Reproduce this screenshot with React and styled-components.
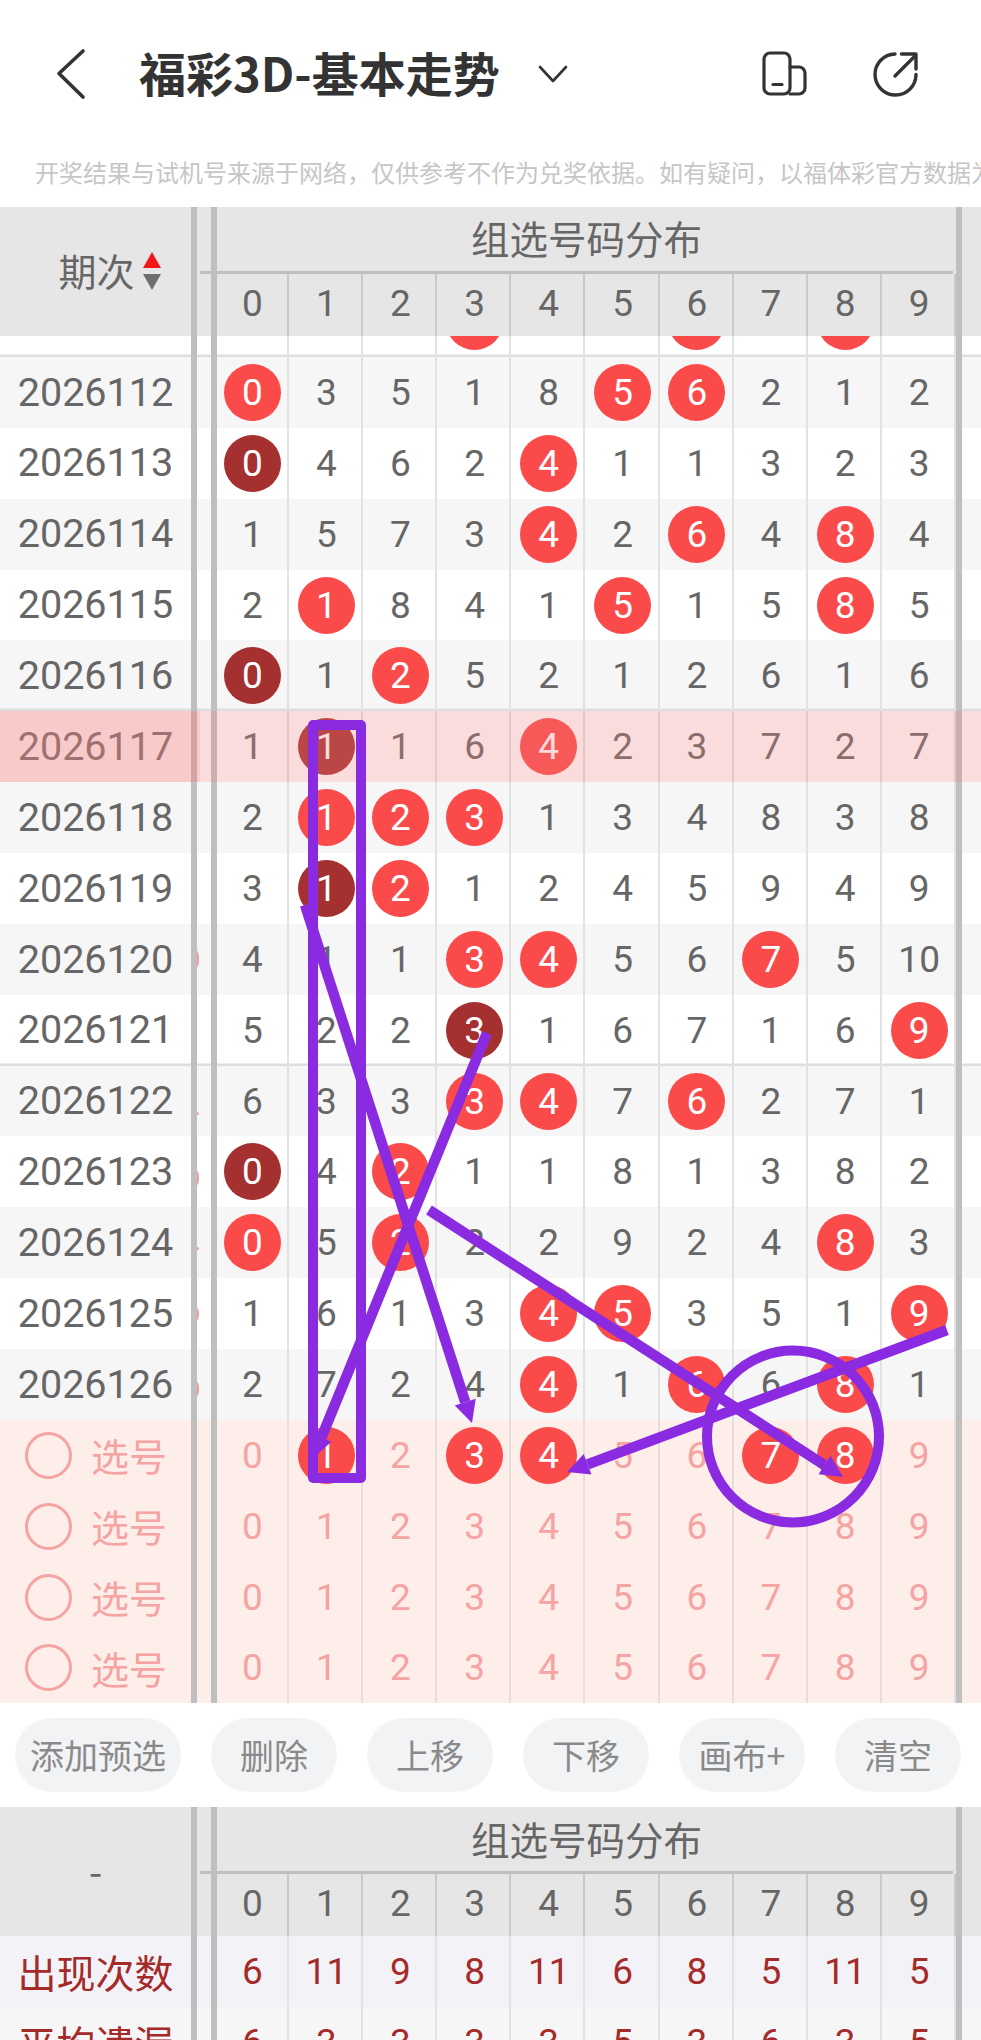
import React from "react";
import styled, { createGlobalStyle } from "styled-components";

const CJK = `"Noto Sans CJK SC", "Noto Sans", sans-serif`;
const NUM = `Roboto, "Noto Sans CJK SC", sans-serif`;

const Global = createGlobalStyle`
  html, body { margin: 0; padding: 0; background: #fff; }
  * { box-sizing: border-box; }
`;

const Page = styled.div`
  position: relative;
  width: 981px;
  height: 2040px;
  overflow: hidden;
  background: #fff;
  font-family: ${CJK};
`;

const Nav = styled.header`
  display: flex;
  align-items: center;
  height: 148px;
  padding-left: 56px;
  padding-bottom: 1px;
  color: #333;
`;
const Title = styled.h1`
  margin: 0 0 5px 51px;
  font-size: 47px;
  line-height: 1;
  font-weight: 700;
  color: #333;
  white-space: nowrap;
`;
const Caret = styled.svg`
  width: 32px;
  height: 20px;
  margin-left: 37px;
`;
const NavIcon = styled.svg`
  margin-left: ${p => p.$ml}px;
  width: ${p => p.$w}px;
  height: ${p => p.$h}px;
`;
const Notice = styled.div`
  height: 59px;
  padding-left: 35px;
  font-size: 24px;
  line-height: 48px;
  color: #c6c6c6;
  white-space: nowrap;
  overflow: hidden;
`;

const Sep = styled.div`
  flex: 0 0 6px;
  align-self: stretch;
  background: #bfbfbf;
  position: relative;
  z-index: 1;
`;
const Gap = styled.div`
  flex: 0 0 14px;
  align-self: stretch;
  display: flex;
  align-items: center;
`;
const Sliver = styled.div`
  width: 2px;
  height: ${p => p.$h}px;
  margin-top: ${p => p.$t}px;
  background: #f19c9c;
  border-radius: 0 100% 100% 0 / 0 50% 50% 0;
`;

const Head = styled.div`
  display: flex;
  height: ${p => p.$h}px;
  background: #e6e6e6;
  color: #666;
`;
const HeadLeft = styled.div`
  flex: 0 0 191px;
  display: flex;
  align-items: center;
  justify-content: center;
  gap: 8px;
  padding-left: ${p => p.$pad || 0}px;
  padding-bottom: 3px;
  font-size: 38px;
  line-height: 1;
`;
const Sorter = styled.div`
  display: flex;
  flex-direction: column;
  gap: 6px;
  padding-top: 2px;
`;
const Tri = styled.div`
  width: 0;
  height: 0;
  border-left: 9.5px solid transparent;
  border-right: 9.5px solid transparent;
  ${p => (p.$up ? "border-bottom: 16px solid #f01a1a;" : "border-top: 16px solid #6e6e6e;")}
`;
const HeadMain = styled.div`
  flex: 0 0 736px;
  display: flex;
  flex-direction: column;
`;
const HeadTitle = styled.div`
  flex: 0 0 ${p => p.$h}px;
  display: flex;
  align-items: center;
  justify-content: center;
  font-size: 38.5px;
  line-height: 1;
  padding-bottom: 3px;
`;
const HeadRule = styled.div`
  flex: 0 0 3px;
  width: 753px;
  margin-left: -17px;
  background: #bfbfbf;
  position: relative;
  z-index: 2;
`;
const Cells = styled.div`
  flex: 0 0 738px;
  margin-left: -2px;
  display: flex;
  align-self: stretch;
`;
const HeadCells = styled(Cells)`
  flex: 1 1 0;
  min-height: 0;
`;
const Cell = styled.div`
  flex: 0 0 74.1px;
  display: flex;
  align-items: center;
  justify-content: center;
  padding-left: 2.5px;
  padding-bottom: ${p => p.$lift || 0}px;
  border-right: 2.5px solid ${p => p.$line};
  font-family: ${NUM};
  font-size: 37px;
  line-height: 1;
  color: ${p => p.$color};
`;
const Ball = styled.div`
  flex: 0 0 57px;
  width: 57px;
  height: 57px;
  border-radius: 50%;
  display: flex;
  align-items: center;
  justify-content: center;
  color: #fff;
  background: ${p => (p.$dark ? "#a53030" : "#fa4a4a")};
`;

const Clip = styled.div`
  height: 21px;
  overflow: hidden;
  display: flex;
  flex-direction: column;
  justify-content: flex-end;
`;
const Row = styled.div`
  position: relative;
  flex: 0 0 ${p => p.$h || 70.87}px;
  height: ${p => p.$h || 70.87}px;
  display: flex;
  background: ${p => p.$bg};
  ${p => (p.$rule ? "box-shadow: inset 0 -2.5px 0 #dedede;" : "")}
  ${p =>
    p.$mark
      ? `
    &::after { content: ""; position: absolute; inset: 0; z-index: 2; background: rgba(240,130,130,.28); }
    &::before { content: ""; position: absolute; left: 0; top: 0; bottom: 0; width: 200px; z-index: 2; background: rgba(240,130,130,.2); }
  `
      : ""}
`;
const Left = styled.div`
  flex: 0 0 191px;
  display: flex;
  align-items: center;
  justify-content: center;
  font-family: ${NUM};
  font-size: 39.6px;
  line-height: 1;
  color: #666;
`;
const StatLabel = styled(Left)`
  font-family: ${CJK};
  font-size: 39px;
  color: #a52a2a;
`;
const SelectLeft = styled.div`
  flex: 0 0 191px;
  display: flex;
  align-items: center;
  padding-left: 25px;
  gap: 19px;
  font-size: 38px;
  line-height: 1;
  color: #f5a3a3;
`;
const Radio = styled.div`
  width: 47px;
  height: 47px;
  border-radius: 50%;
  border: 3px solid #f5a3a3;
`;
const Rest = styled.div`
  flex: 1;
`;

const Toolbar = styled.div`
  height: 104px;
  display: flex;
  align-items: center;
  gap: 30px;
  padding-left: 15px;
  overflow: hidden;
`;
const Pill = styled.div`
  flex: 0 0 auto;
  min-width: 126px;
  height: 74px;
  padding: 0 15px;
  border-radius: 37px;
  background: #f2f3f5;
  color: #8a8a8a;
  font-size: 34px;
  line-height: 1;
  display: flex;
  align-items: center;
  justify-content: center;
  white-space: nowrap;
`;

const Ink = styled.svg`
  position: absolute;
  left: 0;
  top: 0;
  z-index: 5;
  pointer-events: none;
`;

const PURPLE = "#8a2be2";

function Arrow({ x1, y1, x2, y2 }) {
  const dx = x2 - x1;
  const dy = y2 - y1;
  const len = Math.hypot(dx, dy);
  const ux = dx / len;
  const uy = dy / len;
  const bx = x2 - ux * 22;
  const by = y2 - uy * 22;
  const px = -uy * 11;
  const py = ux * 11;
  return (
    <g>
      <line x1={x1} y1={y1} x2={bx} y2={by} stroke={PURPLE} strokeWidth="10.5" />
      <polygon points={`${x2},${y2} ${bx + px},${by + py} ${bx - px},${by - py}`} fill={PURPLE} />
    </g>
  );
}

const rows = [
  ["2026112", "0r 3 5 1 8 5r 6r 2 1 2", 0],
  ["2026113", "0d 4 6 2 4r 1 1 3 2 3", 0],
  ["2026114", "1 5 7 3 4r 2 6r 4 8r 4", 0],
  ["2026115", "2 1r 8 4 1 5r 1 5 8r 5", 0],
  ["2026116", "0d 1 2r 5 2 1 2 6 1 6", 0],
  ["2026117", "1 1d 1 6 4r 2 3 7 2 7", 0],
  ["2026118", "2 1r 2r 3r 1 3 4 8 3 8", 0],
  ["2026119", "3 1d 2r 1 2 4 5 9 4 9", 0],
  ["2026120", "4 1 1 3r 4r 5 6 7r 5 10", [16, 0]],
  ["2026121", "5 2 2 3d 1 6 7 1 6 9r", 0],
  ["2026122", "6 3 3 3r 4r 7 6r 2 7 1", [3, 24]],
  ["2026123", "0d 4 2r 1 1 8 1 3 8 2", [14, 12]],
  ["2026124", "0r 5 2r 2 2 9 2 4 8r 3", [3, 12]],
  ["2026125", "1 6 1 3 4r 5r 3 5 1 9r", [12, 0]],
  ["2026126", "2 7 2 4 4r 1 6r 6 8r 1", [14, 10]],
];

const parse = s =>
  s.split(" ").map(t => {
    const m = t.match(/^(\d+)([rd]?)$/);
    return { v: m[1], k: m[2] };
  });

function DataCells({ spec, line = "#e2e2e2", color = "#666", blank = false }) {
  return (
    <Cells>
      {parse(spec).map((c, i) => (
        <Cell key={i} $line={line} $color={color}>
          {c.k ? <Ball $dark={c.k === "d"}>{blank ? null : c.v}</Ball> : blank ? null : c.v}
        </Cell>
      ))}
    </Cells>
  );
}

const DIGITS = "0 1 2 3 4 5 6 7 8 9";

function TableHead({ height, titleH, left, pad }) {
  return (
    <Head $h={height}>
      <HeadLeft $pad={pad}>{left}</HeadLeft>
      <Sep />
      <Gap />
      <Sep />
      <HeadMain>
        <HeadTitle $h={titleH}>组选号码分布</HeadTitle>
        <HeadRule />
        <HeadCells>
          {parse(DIGITS).map((c, i) => (
            <Cell key={i} $line="#cacaca" $color="#666" $lift={3}>
              {c.v}
            </Cell>
          ))}
        </HeadCells>
      </HeadMain>
      <Sep />
      <Rest />
    </Head>
  );
}

function Spine({ sliver }) {
  return (
    <>
      <Sep />
      <Gap>{sliver ? <Sliver $h={sliver[0]} $t={sliver[1]} /> : null}</Gap>
      <Sep />
    </>
  );
}

export default function App() {
  return (
    <Page>
      <Global />
      <Nav>
        <svg width="32" height="54" viewBox="0 0 32 54" fill="none">
          <path d="M27 4 L3 26.5 L27 50" stroke="#333" strokeWidth="3.6" strokeLinecap="round" strokeLinejoin="round" />
        </svg>
        <Title>福彩3D-基本走势</Title>
        <Caret viewBox="0 0 32 20" fill="none">
          <path d="M3 3 L16 17 L29 3" stroke="#333" strokeWidth="2.6" strokeLinecap="round" strokeLinejoin="round" />
        </Caret>
        <NavIcon $ml={193} $w={46} $h={46} viewBox="0 0 46 46" fill="none" stroke="#333" strokeWidth="3.2" strokeLinecap="round">
          <rect x="2" y="2" width="26" height="41" rx="6" />
          <path d="M28 16 H37 a6 6 0 0 1 6 6 V37 a6 6 0 0 1 -6 6 H28" />
          <path d="M11 33.5 H20" />
        </NavIcon>
        <NavIcon $ml={63} $w={50} $h={50} viewBox="0 0 50 50" fill="none" stroke="#333" strokeWidth="3.4" strokeLinecap="round" strokeLinejoin="round">
          <path d="M24 5 A20.5 20.5 0 1 0 45 25.5" />
          <path d="M24 27 L44 7" />
          <path d="M30.5 5 H45 V20" />
        </NavIcon>
      </Nav>
      <Notice>{"开奖结果与试机号来源于网络\uFF0C仅供参考不作为兑奖依据。如有疑问\uFF0C以福体彩官方数据为准。"}</Notice>

      <TableHead
        height={129}
        titleH={64}
        pad={28}
        left={
          <>
            期次
            <Sorter>
              <Tri $up />
              <Tri />
            </Sorter>
          </>
        }
      />
      <Clip>
        <Row $bg="#fff" $rule>
          <Left />
          <Spine />
          <DataCells spec="0 1 2 3r 4 5 6r 7 8r 9" blank />
          <Sep />
          <Rest />
        </Row>
      </Clip>
      {rows.map(([id, spec, sliver], i) => (
        <Row key={id} $bg={i % 2 === 0 ? "#f6f6f6" : "#fff"} $rule={i % 5 === 4 && i < 14} $mark={i === 5}>
          <Left>{id}</Left>
          <Spine sliver={sliver} />
          <DataCells spec={spec} />
          <Sep />
          <Rest />
        </Row>
      ))}
      {["0 1r 2 3r 4r 5 6 7r 8r 9", DIGITS, DIGITS, DIGITS].map((spec, i) => (
        <Row key={i} $bg="#fdeee9">
          <SelectLeft>
            <Radio />
            选号
          </SelectLeft>
          <Spine />
          <DataCells spec={spec} line="#e6dcd9" color="#f5a3a3" />
          <Sep />
          <Rest />
        </Row>
      ))}

      <Toolbar>
        <Pill>添加预选</Pill>
        <Pill>删除</Pill>
        <Pill>上移</Pill>
        <Pill>下移</Pill>
        <Pill>画布+</Pill>
        <Pill>清空</Pill>
        <Pill />
      </Toolbar>

      <TableHead height={129} titleH={64} left="-" />
      <Row $bg="#f3f3f7" $h={71}>
        <StatLabel>出现次数</StatLabel>
        <Spine />
        <DataCells spec="6 11 9 8 11 6 8 5 11 5" color="#a52a2a" />
        <Sep />
        <Rest />
      </Row>
      <Row $bg="#f6f6f6" $h={71}>
        <StatLabel>平均遗漏</StatLabel>
        <Spine />
        <DataCells spec="6 3 3 3 3 5 3 6 3 5" color="#a52a2a" />
        <Sep />
        <Rest />
      </Row>

      <Ink width="981" height="2040" viewBox="0 0 981 2040" fill="none">
        <rect x="313" y="725" width="48" height="753" stroke={PURPLE} strokeWidth="10" strokeLinejoin="round" />
        <Arrow x1={305} y1={905} x2={472} y2={1423} />
        <Arrow x1={487} y1={1033} x2={313} y2={1458} />
        <Arrow x1={429} y1={1210} x2={843} y2={1477} />
        <Arrow x1={947} y1={1330} x2={567} y2={1472} />
        <circle cx="793" cy="1436.5" r="86" stroke={PURPLE} strokeWidth="10" />
      </Ink>
    </Page>
  );
}
